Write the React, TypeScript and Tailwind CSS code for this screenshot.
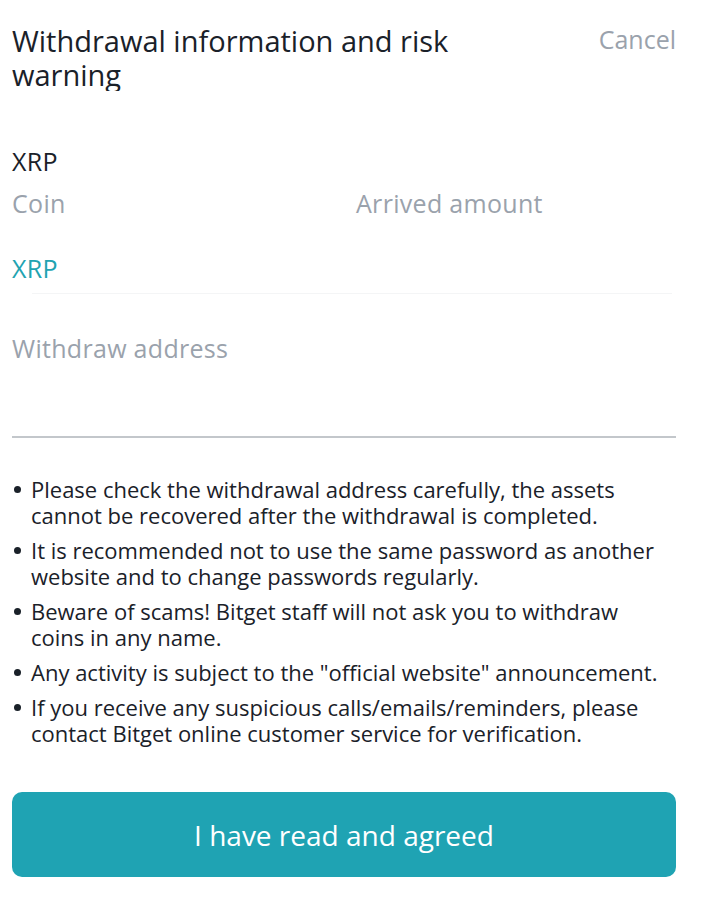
const notes = [
  'Please check the withdrawal address carefully, the assets cannot be recovered after the withdrawal is completed.',
  'It is recommended not to use the same password as another website and to change passwords regularly.',
  'Beware of scams! Bitget staff will not ask you to withdraw coins in any name.',
  'Any activity is subject to the "official website" announcement.',
  'If you receive any suspicious calls/emails/reminders, please contact Bitget online customer service for verification.',
]

export default function App() {
  return (
    <div
      className="w-[704px] h-[902px] bg-white overflow-hidden"
      style={{ fontFamily: '"Open Sans", Roboto, sans-serif' }}
    >
      <div className="px-3">
        <div className="flex items-start justify-between pt-[24px]">
          <h1 className="w-[480px] h-[67px] overflow-hidden text-[29px] leading-[34px] text-[#1a2129]">
            Withdrawal information and risk warning
          </h1>
          <button className="pr-[16px] text-[25px] leading-[30px] text-[#9aa2ac]">
            Cancel
          </button>
        </div>

        <div className="mt-[55px] text-[25px] leading-[30px] tracking-[0.3px] text-[#1a2129]">XRP</div>
        <div className="mt-[12px] grid grid-cols-2 text-[25px] leading-[30px] tracking-[0.3px] text-[#9aa2ac]">
          <span>Coin</span>
          <span className="pl-[4px]">Arrived amount</span>
        </div>

        <div className="mt-[35px] text-[25px] leading-[30px] tracking-[0.3px] text-[#21a3b1]">XRP</div>
        <div className="mt-[10px] mx-[20px] h-px bg-[#f4f5f6]" />

        <div className="mt-[39px] text-[25px] leading-[30px] tracking-[0.3px] text-[#9aa2ac]">
          Withdraw address
        </div>
        <div className="mt-[73px] mr-[16px] h-[2px] bg-[#c3c7cb]" />

        <ul className="mt-[38px] flex flex-col gap-[9px] text-[22px] leading-[26px] text-[#1a2129]">
          {notes.map((n) => (
            <li key={n} className="flex items-start">
              <span className="w-[19px] shrink-0 pl-[2px] pt-[10px]">
                <span className="block w-[7px] h-[7px] rounded-full bg-[#1a2129]" />
              </span>
              <span className="pr-[16px]">{n}</span>
            </li>
          ))}
        </ul>

        <button className="mt-[46px] w-[664px] h-[85px] rounded-[10px] bg-[#1fa3b3] text-white text-[28px]">
          I have read and agreed
        </button>
      </div>
    </div>
  )
}
